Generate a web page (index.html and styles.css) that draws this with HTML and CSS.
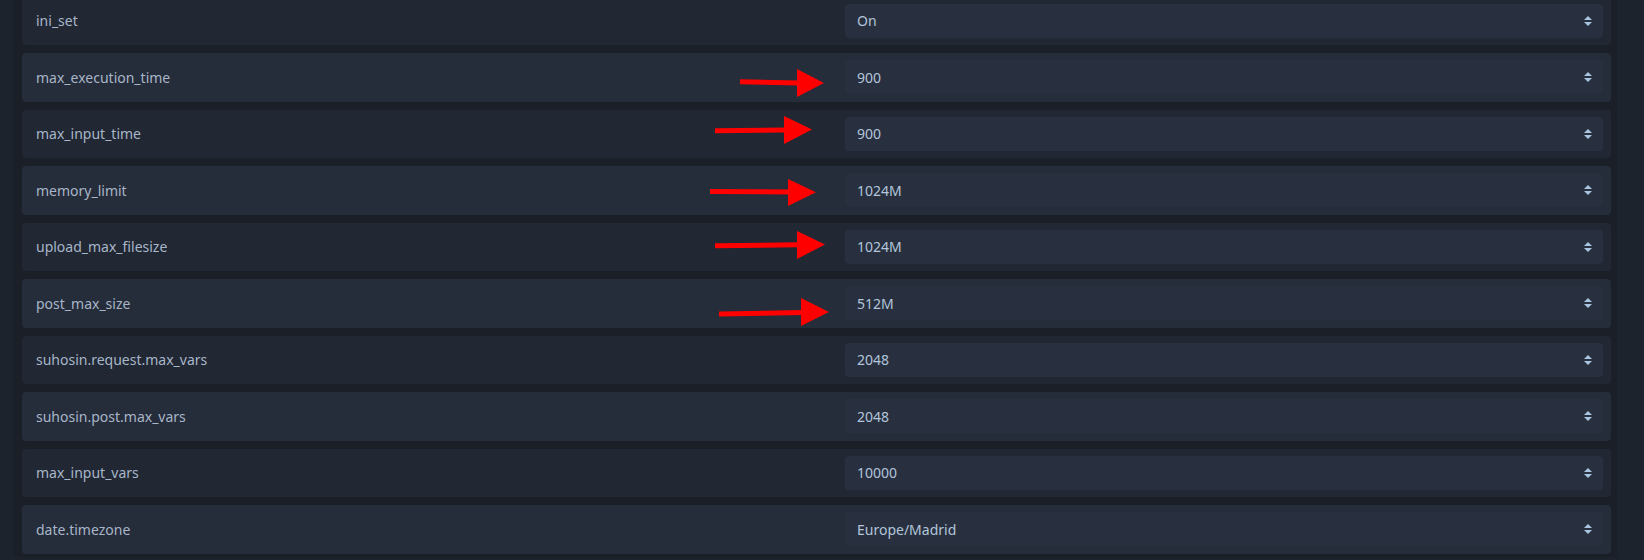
FILE: index.html
```html
<!DOCTYPE html>
<html>
<head>
    <meta name="viewport" content="width=device-width, initial-scale=1">
    <title>PHP settings</title>
    <link rel="stylesheet" href="styles.css">
</head>
<body>
    <div class="panel">
        <div class="settings">
            <div class="row">
                <div class="label">ini_set</div>
                <div class="select"><span>On</span><svg class="caret" width="8" height="10" viewBox="0 0 8 10"><path d="M0 4 L4 0 L8 4 Z M0 6 L8 6 L4 10 Z"/></svg></div>
            </div>
            <div class="row">
                <div class="label">max_execution_time</div>
                <div class="select"><span>900</span><svg class="caret" width="8" height="10" viewBox="0 0 8 10"><path d="M0 4 L4 0 L8 4 Z M0 6 L8 6 L4 10 Z"/></svg></div>
            </div>
            <div class="row">
                <div class="label">max_input_time</div>
                <div class="select"><span>900</span><svg class="caret" width="8" height="10" viewBox="0 0 8 10"><path d="M0 4 L4 0 L8 4 Z M0 6 L8 6 L4 10 Z"/></svg></div>
            </div>
            <div class="row">
                <div class="label">memory_limit</div>
                <div class="select"><span>1024M</span><svg class="caret" width="8" height="10" viewBox="0 0 8 10"><path d="M0 4 L4 0 L8 4 Z M0 6 L8 6 L4 10 Z"/></svg></div>
            </div>
            <div class="row">
                <div class="label">upload_max_filesize</div>
                <div class="select"><span>1024M</span><svg class="caret" width="8" height="10" viewBox="0 0 8 10"><path d="M0 4 L4 0 L8 4 Z M0 6 L8 6 L4 10 Z"/></svg></div>
            </div>
            <div class="row">
                <div class="label">post_max_size</div>
                <div class="select"><span>512M</span><svg class="caret" width="8" height="10" viewBox="0 0 8 10"><path d="M0 4 L4 0 L8 4 Z M0 6 L8 6 L4 10 Z"/></svg></div>
            </div>
            <div class="row">
                <div class="label">suhosin.request.max_vars</div>
                <div class="select"><span>2048</span><svg class="caret" width="8" height="10" viewBox="0 0 8 10"><path d="M0 4 L4 0 L8 4 Z M0 6 L8 6 L4 10 Z"/></svg></div>
            </div>
            <div class="row">
                <div class="label">suhosin.post.max_vars</div>
                <div class="select"><span>2048</span><svg class="caret" width="8" height="10" viewBox="0 0 8 10"><path d="M0 4 L4 0 L8 4 Z M0 6 L8 6 L4 10 Z"/></svg></div>
            </div>
            <div class="row">
                <div class="label">max_input_vars</div>
                <div class="select"><span>10000</span><svg class="caret" width="8" height="10" viewBox="0 0 8 10"><path d="M0 4 L4 0 L8 4 Z M0 6 L8 6 L4 10 Z"/></svg></div>
            </div>
            <div class="row">
                <div class="label">date.timezone</div>
                <div class="select"><span>Europe/Madrid</span><svg class="caret" width="8" height="10" viewBox="0 0 8 10"><path d="M0 4 L4 0 L8 4 Z M0 6 L8 6 L4 10 Z"/></svg></div>
            </div>
        </div>
    </div>

    <!-- red annotation arrows drawn over the page -->
    <svg class="arrows" width="1644" height="560" viewBox="0 0 1644 560">
        <g stroke="#ff0000" stroke-width="5" fill="#ff0000">
            <line x1="740" y1="81.7" x2="799" y2="83"/>
            <polygon stroke="none" points="797,69 824,83 797,97"/>
            <line x1="715" y1="130.7" x2="786" y2="130"/>
            <polygon stroke="none" points="784,116 812,129.5 784,144"/>
            <line x1="710" y1="191.5" x2="790" y2="192"/>
            <polygon stroke="none" points="788,179 816,192.3 788,206"/>
            <line x1="715" y1="245.7" x2="799" y2="244.8"/>
            <polygon stroke="none" points="797,231 825,244.5 797,259"/>
            <line x1="719" y1="314" x2="803" y2="312.5"/>
            <polygon stroke="none" points="801,298 829,312 801,326"/>
        </g>
    </svg>
</body>
</html>
```

FILE: styles.css
```css
body {
    margin: 0;
    height: 560px;
    overflow: hidden;
    background-color: #1d232c;
    font-family: "Noto Sans", "Open Sans", sans-serif;
    font-size: 14px;
}

.panel {
    margin-left: 13px;
    width: 1604px;
    height: 560px;
    padding: 0 6.5px 0 8.5px;
    box-sizing: border-box;
    background-color: #1a1f28;
}

.settings {
    margin-top: -3.5px;
    display: flex;
    flex-direction: column;
    gap: 8px;
}

.row {
    display: grid;
    grid-template-columns: 1fr 758px;
    align-items: center;
    height: 48.5px;
    padding: 0 7.5px 0 14.5px;
    box-sizing: border-box;
    background-color: #212733;
    border-radius: 4px;
}

.row:nth-child(even) {
    background-color: #252c3a;
}

.label {
    color: #a7b6c8;
}

.select {
    display: flex;
    align-items: center;
    justify-content: space-between;
    height: 34px;
    padding: 0 11px 0 12px;
    box-sizing: border-box;
    background-color: #28303f;
    border-radius: 4px;
    color: #b2c5da;
}

.caret {
    fill: #a9c4e0;
}

.arrows {
    position: absolute;
    top: 0;
    left: 0;
    pointer-events: none;
}
```
